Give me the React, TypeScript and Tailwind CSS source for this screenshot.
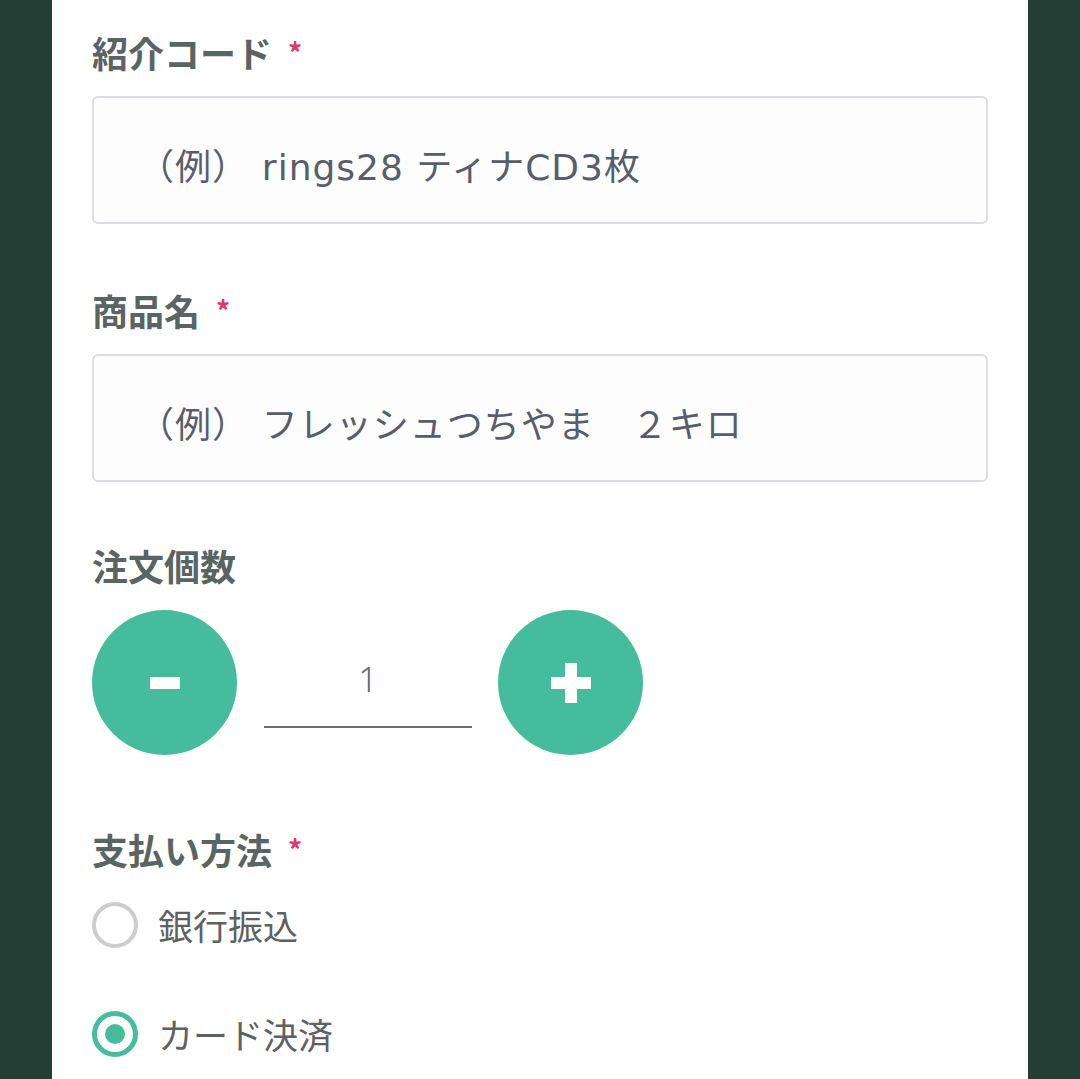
import { useState } from 'react';

const font = { fontFamily: '"Noto Sans CJK JP", "Noto Sans", sans-serif' };
const fieldFont = { fontFamily: '"DejaVu Sans", "Noto Sans CJK JP", sans-serif' };

const Label = ({ text, required }: { text: string; required?: boolean }) => (
  <div className="flex items-center h-[40px] text-[36px] font-bold text-[#5a6462] leading-none">
    <span>{text}</span>
    {required && <span className="ml-[16px] text-[28px] text-[#e0386c]">*</span>}
  </div>
);

const TextField = ({ placeholder }: { placeholder: string }) => (
  <input
    type="text"
    placeholder={placeholder}
    style={fieldFont}
    className="w-full h-[128px] rounded-[6px] border-2 border-[#dadee3] bg-[#fdfdfe] pl-[44px] pt-[14px] text-[36px] tracking-[1px] text-[#585d6c] placeholder:text-[#585d6c] outline-none"
  />
);

const Radio = ({ label, checked, onClick }: { label: string; checked: boolean; onClick: () => void }) => (
  <button onClick={onClick} className="flex items-center gap-[20px] text-left">
    <span
      className={
        checked
          ? 'w-[46px] h-[46px] rounded-full border-[5px] border-[#45bc9c] flex items-center justify-center'
          : 'w-[46px] h-[46px] rounded-full border-[4px] border-[#cdcdcd]'
      }
    >
      {checked && <span className="w-[20px] h-[20px] rounded-full bg-[#45bc9c]" />}
    </span>
    <span className="text-[35px] text-[#5d6261]">{label}</span>
  </button>
);

export default function App() {
  const [count, setCount] = useState(1);
  const [payment, setPayment] = useState('card');

  return (
    <div className="w-[1080px] h-[1079px] bg-[#243d35] flex justify-center overflow-hidden" style={font}>
      <div className="w-[976px] h-full bg-white px-[40px] pt-[32px]">
        <Label text="紹介コード" required />
        <div className="mt-[24px]">
          <TextField placeholder={'（例）\u2004rings28 ティナCD3枚'} />
        </div>

        <div className="mt-[66px]">
          <Label text="商品名" required />
        </div>
        <div className="mt-[24px]">
          <TextField placeholder={'（例）\u2004フレッシュつちやま　２キロ'} />
        </div>

        <div className="mt-[63px]">
          <Label text="注文個数" />
        </div>
        <div className="mt-[25px] flex items-center">
          <button
            onClick={() => setCount(c => Math.max(1, c - 1))}
            className="w-[145px] h-[145px] rounded-full bg-[#45bc9c] flex items-center justify-center"
          >
            <span className="w-[30px] h-[12px] bg-white" />
          </button>
          <div className="ml-[27px] w-[208px] h-[145px] flex flex-col justify-end pb-[27px]">
            <div
              className="text-center text-[34px] leading-none font-light text-[#6a6a6a] pb-[30px]"
              style={{ fontFamily: '"Noto Sans", "Liberation Sans", sans-serif' }}
            >
              {count}
            </div>
            <div className="h-[2px] bg-[#6b6e70]" />
          </div>
          <button
            onClick={() => setCount(c => c + 1)}
            className="ml-[26px] w-[145px] h-[145px] rounded-full bg-[#45bc9c] flex items-center justify-center"
          >
            <svg width="40" height="40" viewBox="0 0 40 40">
              <rect x="14" y="0" width="12" height="40" fill="#fff" />
              <rect x="0" y="14" width="40" height="12" fill="#fff" />
            </svg>
          </button>
        </div>

        <div className="mt-[74px]">
          <Label text="支払い方法" required />
        </div>
        <div className="mt-[30px] flex flex-col gap-[56px]">
          <Radio label="銀行振込" checked={payment === 'bank'} onClick={() => setPayment('bank')} />
          <Radio label="カード決済" checked={payment === 'card'} onClick={() => setPayment('card')} />
        </div>
      </div>
    </div>
  );
}
